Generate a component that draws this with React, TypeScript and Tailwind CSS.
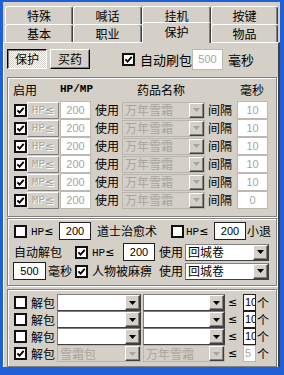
import React from "react";

type MedRow = { kind: "HP" | "MP"; ms: string };

const medRows: MedRow[] = [
  { kind: "HP", ms: "10" },
  { kind: "HP", ms: "10" },
  { kind: "HP", ms: "10" },
  { kind: "MP", ms: "10" },
  { kind: "MP", ms: "10" },
  { kind: "MP", ms: "0" },
];

const unpackRows = [
  { on: false, a: "", b: "", n: "10", off: false },
  { on: false, a: "", b: "", n: "10", off: false },
  { on: false, a: "", b: "", n: "10", off: false },
  { on: true, a: "雪霜包", b: "万年雪霜", n: "5", off: true },
];

function Check({ on }: { on?: boolean }) {
  return (
    <span className="flex h-[13px] w-[13px] shrink-0 items-center justify-center border-2 border-[#111] bg-white">
      {on && (
        <svg width="9" height="9" viewBox="0 0 9 9">
          <path d="M1.4 4.3 L3.6 6.6 L7.7 1.9" fill="none" stroke="#000" strokeWidth="1.9" />
        </svg>
      )}
    </span>
  );
}

function Arrow({ off }: { off?: boolean }) {
  return (
    <svg width="7" height="4" viewBox="0 0 7 4">
      <path d="M0 0h7L3.5 4z" fill={off ? "#a8a59d" : "#000"} />
    </svg>
  );
}

function Combo({ w, text, off }: { w: string; text?: string; off?: boolean }) {
  return (
    <div
      className={`flex h-[17px] shrink-0 items-stretch border ${
        off
          ? "border-[#b9b6ae] bg-[#d4d0c8] text-[#a8a59d]"
          : "border-t-[#808080] border-l-[#808080] border-r-[#404040] border-b-[#404040] bg-white text-black"
      } ${w}`}
    >
      <span className="flex flex-1 items-center overflow-hidden whitespace-nowrap pl-[2px]">{text}</span>
      <span className="flex w-[15px] shrink-0 items-center justify-center border border-t-white border-l-white border-r-[#404040] border-b-[#404040] bg-[#d4d0c8] shadow-[inset_-1px_-1px_0_#808080]">
        <Arrow off={off} />
      </span>
    </div>
  );
}

function Field({ w, value, off }: { w: string; value: string; off?: boolean }) {
  return (
    <span
      className={`flex h-[18px] shrink-0 items-center justify-center bg-white font-['Liberation_Sans',sans-serif] text-[11px] ${
        off ? "border border-[#bcb9b1] text-[#a8a59d]" : "border border-[#222] text-black"
      } ${w}`}
    >
      {value}
    </span>
  );
}

function Hp({ k = "HP" }: { k?: string }) {
  return (
    <>
      <span className="font-['Liberation_Mono',monospace] text-[11px]">{k}</span>
      <span className="font-['DejaVu_Sans',sans-serif] text-[11px]">≤</span>
    </>
  );
}

const group =
  "ml-[3px] w-[270px] shrink-0 border border-[#808080] shadow-[inset_1px_1px_0_#fff,1px_1px_0_#fff]";

export default function App() {
  const tab =
    "flex h-[18px] items-center justify-center rounded-t-[3px] border-l border-t border-white border-r border-r-[#404040] shadow-[inset_-1px_0_0_#808080]";

  return (
    <div className="h-[375px] w-[284px] bg-[#1f5fd8] pb-[8px] pl-[3px] pr-[4px] pt-[2px] font-['Noto_Sans_CJK_SC',sans-serif] text-[12px] leading-none text-black">
      <div className="flex h-full flex-col overflow-hidden bg-[#d4d0c8] pt-[4px]">
        {/* Tabs */}
        <div className="ml-[2px] flex h-[18px]">
          <div className={`${tab} w-[68px]`}>特殊</div>
          <div className={`${tab} w-[69px]`}>喊话</div>
          <div className={`${tab} w-[69px]`}>挂机</div>
          <div className={`${tab} w-[67px]`}>按键</div>
        </div>
        <div className="ml-[2px] flex h-[18px] items-start">
          <div className={`${tab} w-[68px]`}>基本</div>
          <div className={`${tab} w-[69px]`}>职业</div>
          <div className={`${tab} relative z-10 -mb-[1px] -mt-[2px] h-[21px] w-[69px] bg-[#d4d0c8] pb-[3px]`}>保护</div>
          <div className={`${tab} w-[67px]`}>物品</div>
        </div>

        {/* Panel */}
        <div className="flex flex-1 flex-col border-l border-t border-white border-r-2 border-r-[#404040]">
          <div className="mt-[6px] flex h-[20px] items-center">
            <span className="ml-[3px] flex h-[20px] w-[40px] items-center justify-center border border-t-black border-l-black border-r-white border-b-white bg-[repeating-conic-gradient(#ffffff_0_25%,#d4d0c8_0_50%)] bg-[length:2px_2px] shadow-[inset_1px_1px_0_#808080]">
              保护
            </span>
            <span className="ml-[3px] flex h-[20px] w-[40px] items-center justify-center border border-t-white border-l-white border-r-black border-b-black shadow-[inset_-1px_-1px_0_#808080]">
              买药
            </span>
            <span className="ml-[32px]">
              <Check on />
            </span>
            <span className="ml-[5px] w-[52px] text-[13px]">自动刷包</span>
            <Field w="w-[31px] h-[21px]" value="500" off />
            <span className="ml-[5px] text-[13px]">毫秒</span>
          </div>

          {/* Medicine group */}
          <div className={`${group} mt-[8px] h-[140px]`}>
            <div className="flex h-[23px] items-center">
              <span className="w-[52px] pl-[5px]">启用</span>
              <span className="w-[77px] font-['Liberation_Mono',monospace] text-[11px] font-bold">HP/MP</span>
              <span className="w-[103px]">药品名称</span>
              <span>毫秒</span>
            </div>
            {medRows.map((r, i) => (
              <div key={i} className="flex h-[18px] items-center">
                <span className="ml-[6px]">
                  <Check on />
                </span>
                <span className="flex h-[17px] w-[32px] shrink-0 items-center justify-center border border-t-white border-l-white border-r-[#808080] border-b-[#808080] text-[#a8a59d] [text-shadow:1px_1px_0_#fff]">
                  <Hp k={r.kind} />
                </span>
                <Field w="ml-[1px] w-[31px]" value="200" off />
                <span className="w-[31px] pl-[4px]">使用</span>
                <Combo w="w-[83px]" text="万年雪霜" off />
                <span className="w-[32px] pl-[3px]">间隔</span>
                <Field w="w-[31px]" value={r.ms} off />
              </div>
            ))}
          </div>

          {/* Auto group */}
          <div className={`${group} mt-[1px] h-[68px] pt-[3px]`}>
            <div className="flex h-[18px] items-center">
              <span className="ml-[6px]">
                <Check />
              </span>
              <span className="w-[32px] pl-[4px]">
                <Hp />
              </span>
              <Field w="w-[32px]" value="200" />
              <span className="w-[80px] pl-[6px]">道士治愈术</span>
              <Check />
              <span className="w-[30px] pl-[2px]">
                <Hp />
              </span>
              <Field w="w-[32px]" value="200" />
              <span className="pl-[1px]">小退</span>
            </div>
            <div className="mt-[2px] flex h-[20px] items-center">
              <span className="w-[67px] pl-[6px]">自动解包</span>
              <Check on />
              <span className="w-[35px] pl-[4px]">
                <Hp />
              </span>
              <Field w="w-[32px]" value="200" />
              <span className="w-[30px] pl-[4px]">使用</span>
              <Combo w="w-[84px]" text="回城卷" />
            </div>
            <div className="flex h-[18px] items-center">
              <Field w="ml-[5px] w-[33px]" value="500" />
              <span className="w-[29px] pl-[2px]">毫秒</span>
              <Check on />
              <span className="w-[71px] pl-[4px]">人物被麻痹</span>
              <span className="w-[26px]">使用</span>
              <Combo w="w-[84px]" text="回城卷" />
            </div>
          </div>

          {/* Unpack group */}
          <div className={`${group} mt-[3px] h-[78px] pt-[4px]`}>
            {unpackRows.map((r, i) => (
              <div key={i} className="flex h-[17px] items-center">
                <span className="ml-[6px]">
                  <Check on={r.on} />
                </span>
                <span className="w-[30px] pl-[4px]">解包</span>
                <Combo w="w-[84px]" text={r.a} off={r.off} />
                <Combo w="ml-[2px] w-[82px]" text={r.b} off={r.off} />
                <span className="w-[18px] pl-[3px] font-['DejaVu_Sans',sans-serif] text-[11px]">≤</span>
                <span
                  className={`flex h-[17px] w-[13px] shrink-0 items-center overflow-hidden bg-white pl-[1px] font-['Liberation_Sans',sans-serif] text-[11px] ${
                    r.off ? "border border-[#bcb9b1] text-[#a8a59d]" : "border border-[#222]"
                  }`}
                >
                  {r.n}
                </span>
                <span className="pl-[1px]">个</span>
              </div>
            ))}
          </div>
        </div>
      </div>
    </div>
  );
}
